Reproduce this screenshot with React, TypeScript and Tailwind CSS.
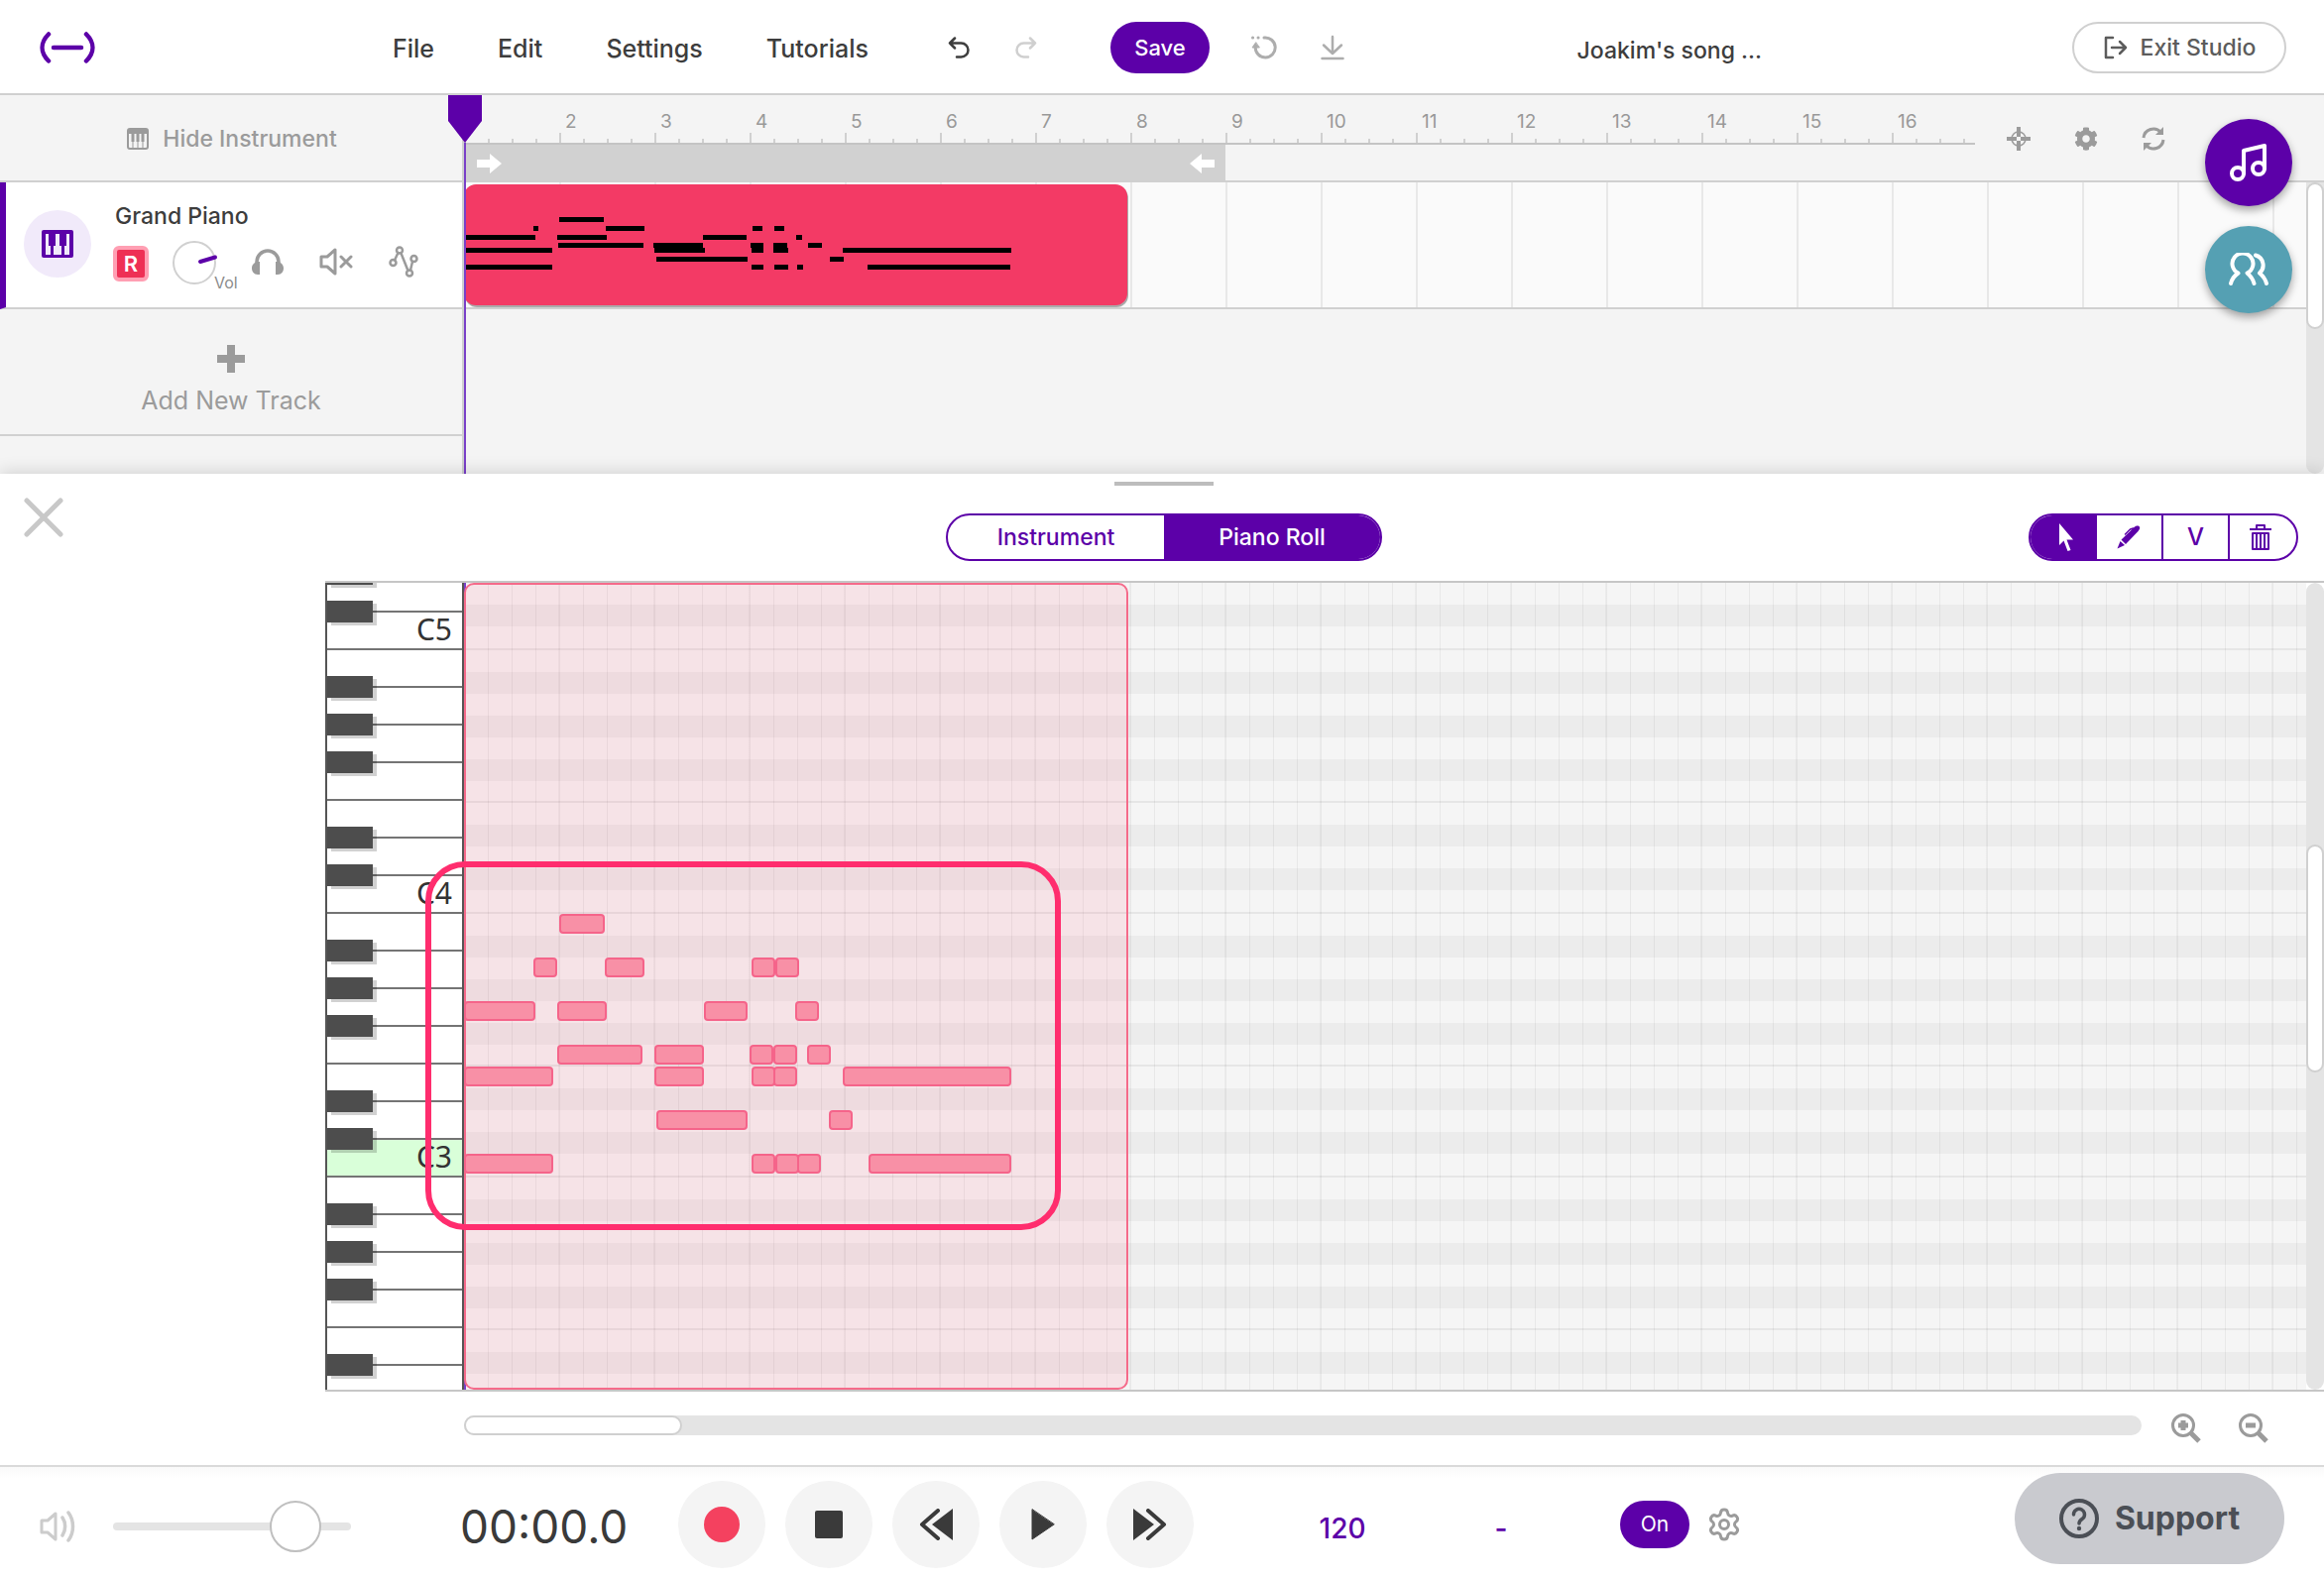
import type { ReactNode } from "react";
import { FaCog } from "react-icons/fa";
import { Settings } from "lucide-react";

type Note = [x: number, y: number, width: number];

const CLIP_NOTES: Note[] = [
  [96, 33, 45],
  [70, 42, 5], [143, 42, 39], [291, 42, 10], [313, 42, 10],
  [2, 51, 70], [94, 51, 50], [241, 51, 44], [335, 51, 6],
  [95, 59, 86], [191, 59, 50], [289, 59, 13], [312, 59, 14], [347, 59, 14],
  [2, 64, 87], [192, 64, 51], [290, 64, 12], [312, 64, 15], [382, 64, 170],
  [194, 73, 92], [369, 73, 14],
  [2, 81, 87], [290, 81, 12], [313, 81, 14], [336, 81, 6], [407, 81, 144],
];

const ROLL_NOTES: Note[] = [
  [96, 334, 46],
  [70, 378, 24], [142, 378, 40], [290, 378, 24], [314, 378, 24],
  [0, 422, 72], [94, 422, 50], [242, 422, 44], [334, 422, 24],
  [94, 466, 86], [192, 466, 50], [288, 466, 24], [312, 466, 24], [346, 466, 24],
  [0, 488, 90], [192, 488, 50], [290, 488, 24], [312, 488, 24], [382, 488, 170],
  [194, 532, 92], [368, 532, 24],
  [0, 576, 90], [290, 576, 24], [314, 576, 24], [336, 576, 24], [408, 576, 144],
];

const SEMITONES = ["B", "A#", "A", "G#", "G", "F#", "F", "E", "D#", "D", "C#", "C"];
const GRID_ROWS = ["D", "C#", "C", ...SEMITONES, ...SEMITONES, ...SEMITONES];

const WHITE = ["B", "A", "G", "F", "E", "D", "C"];
const KEYS = [
  "C5",
  ...WHITE.map((k) => k + "4"),
  ...WHITE.map((k) => k + "3"),
  "B2", "A2", "G2", "F2", "E2", "D2",
];

function Icon({ w, h, label, children, className = "" }: { w: number; h: number; label?: string; children: ReactNode; className?: string }) {
  return (
    <svg
      width={w}
      height={h}
      viewBox={`0 0 ${w} ${h}`}
      fill="none"
      stroke="currentColor"
      strokeLinecap="round"
      strokeLinejoin="round"
      aria-hidden={label ? undefined : true}
      aria-label={label}
      className={`shrink-0 ${className}`}
    >
      {children}
    </svg>
  );
}

function Header() {
  return (
    <header className="flex h-24 shrink-0 items-center border-b-2 border-[#d0d0d0] bg-white pt-[2px] pr-[38px] pl-10 font-medium text-[#3d3d3d]">
      <a href="#home" aria-label="Soundtrap home" className="w-[356px] text-[#5c00a8]">
        <Icon w={56} h={32}>
          <path d="M9 2.5C.5 11 .5 21 9 29.500" strokeWidth="4.500" />
          <path d="M47 2.500c8.500 8.500 8.500 18.500 0 27" strokeWidth="4.500" />
          <path d="M14 16H42" strokeWidth="4.500" />
        </Icon>
      </a>
      <nav className="flex gap-16 pt-1 text-[25px]">
        <button>File</button>
        <button>Edit</button>
        <button>Settings</button>
        <button>Tutorials</button>
      </nav>
      <div className="ml-20 flex items-center gap-[46px]">
        <button aria-label="Undo">
          <Icon w={22} h={22}>
            <path d="M7 1.500 2 6.500l5 5M2 6.500h11.500a7 7 0 0 1 0 14H9" strokeWidth="2.500" />
          </Icon>
        </button>
        <button aria-label="Redo" className="text-[#cfcfcf]">
          <Icon w={22} h={22}>
            <path d="M15 1.500l5 5-5 5M20 6.500H8.500a7 7 0 0 0 0 14H13" strokeWidth="2.500" />
          </Icon>
        </button>
      </div>
      <button className="ml-[74px] flex h-[52px] w-[100px] items-center justify-center rounded-full bg-[#5c00a8] text-[22px] text-white">Save</button>
      <div className="ml-[42px] flex items-center gap-[44px] text-[#adadad]">
        <button aria-label="Restore version">
          <Icon w={26} h={24}>
            <path d="M1.500 2h.1M7 2h.1" strokeWidth="3" />
            <path d="M13 2a10 10 0 1 1-8.800 9.500" strokeWidth="3" />
            <path d="M4.500 7 1 12h7Z" fill="currentColor" strokeWidth="1" />
          </Icon>
        </button>
        <button aria-label="Download">
          <Icon w={24} h={26}>
            <path d="M12 2v16M3 10.500l9 8.500 9-8.500M1.500 24h21" strokeWidth="2.500" />
          </Icon>
        </button>
      </div>
      <h1 className="ml-auto pt-[6px] text-[23px] font-medium">Joakim's song ...</h1>
      <a href="#exit" className="ml-[313px] flex h-[52px] w-[216px] shrink-0 items-center justify-center gap-3 rounded-full border-2 border-[#d0d0d0] text-[23px] text-[#5c5c5c]">
        <Icon w={26} h={24}>
          <path d="M10 2H3v20h7M9 12h14M17 6l6 6-6 6" strokeWidth="2.500" />
        </Icon>
        <span className="whitespace-nowrap">Exit Studio</span>
      </a>
    </header>
  );
}

function Ruler() {
  return (
    <div className="flex h-[88px] border-b-2 border-[#d0d0d0]">
      <div className="flex flex-1 flex-col overflow-hidden">
        <div className="flex h-[50px] border-b-2 border-[#c4c4c4]">
          {Array.from({ length: 16 }, (_, i) => (
            <div key={i} className="flex w-24 shrink-0 flex-col justify-end">
              <span className="pl-[6px] text-[19px] leading-[22px] text-[#999]">{i === 0 ? "" : i + 1}</span>
              <div className="flex items-end">
                <i className="h-[10px] w-6 border-l-2 border-[#d0d0d0]" />
                <i className="h-1 w-6 border-l-2 border-[#d0d0d0]" />
                <i className="h-1 w-6 border-l-2 border-[#d0d0d0]" />
                <i className="h-1 w-6 border-l-2 border-[#d0d0d0]" />
              </div>
            </div>
          ))}
        </div>
        <div className="flex h-9 w-[768px] items-center justify-between bg-[#d1d1d1] pt-[2px] pr-[11px] pl-[13px] text-white">
          <Icon w={26} h={20}>
            <path d="M0 6h13V0l12 10-12 10v-6H0Z" fill="currentColor" stroke="none" />
          </Icon>
          <Icon w={26} h={20}>
            <path d="M26 6H13V0L1 10l12 10v-6h13Z" fill="currentColor" stroke="none" />
          </Icon>
        </div>
      </div>
      <div className="flex w-[352px] shrink-0 items-center gap-[44px] pt-[2px] pl-8 text-[#9b9b9b]">
        <button aria-label="Center on playhead">
          <Icon w={24} h={24}>
            <circle cx="12" cy="12" r="7" strokeWidth="1.500" />
            <path d="M12 0v10M12 14v10M0 12h10M14 12h10" strokeWidth="4" strokeLinecap="butt" />
          </Icon>
        </button>
        <button aria-label="Timeline settings">
          <FaCog size={24} />
        </button>
        <button aria-label="Toggle loop">
          <Icon w={24} h={24}>
            <path d="M2 11A10 10 0 0 1 19.500 5.500M22 13A10 10 0 0 1 4.500 18.500" strokeWidth="3" strokeLinecap="butt" />
            <path d="M22 0v8h-8ZM2 24v-8h8Z" fill="currentColor" stroke="none" />
          </Icon>
        </button>
      </div>
    </div>
  );
}

function PianoIcon() {
  return (
    <Icon w={32} h={28} label="Piano">
      <rect width="32" height="28" rx="2" fill="currentColor" stroke="none" />
      <path d="M4 4h3v12h2v9H4ZM14 4h4v12h2v9h-8v-9h2ZM25 4h3v21h-5v-9h2Z" fill="#f1eafa" stroke="none" />
    </Icon>
  );
}

function TrackHeader() {
  return (
    <div className="flex h-[128px] items-start border-b-2 border-l-[6px] border-b-[#d0d0d0] border-l-[#5c00a8] bg-white pl-[18px]">
      <div className="mt-7 flex size-[68px] items-center justify-center rounded-full bg-[#f1eafa] text-[#5c00a8]">
        <PianoIcon />
      </div>
      <div className="ml-[22px] flex flex-col pt-5">
        <span className="pl-[2px] text-[23px] leading-7 font-medium text-[#3d3d3d]">Grand Piano</span>
        <div className="flex h-16 items-center text-[#9b9b9b]">
          <button aria-label="Arm recording" className="mt-1 flex size-9 items-center justify-center rounded-md border-4 border-[#ff9fb3] bg-[#ee3055] text-[22px] font-semibold text-white">R</button>
          <div className="relative mt-[2px] ml-6 size-11">
            <Icon w={46} h={44}>
              <circle cx="22" cy="22" r="21" stroke="#d0d0d0" strokeWidth="2" />
              <path d="M28 21 43 16.500" stroke="#5c00a8" strokeWidth="4" />
            </Icon>
            <span className="absolute top-8 left-[42px] text-base leading-5 text-[#8c8c8c]">Vol</span>
          </div>
          <button aria-label="Solo" className="ml-9">
            <Icon w={32} h={28}>
              <path d="M5 18v-4a11 11 0 0 1 22 0v4" strokeWidth="3.500" />
              <path d="M8 14v13H6c-4 0-6-3-6-6.500S3 14 6 14ZM24 14v13h2c4 0 6-3 6-6.500S29 14 26 14Z" fill="currentColor" stroke="none" />
            </Icon>
          </button>
          <button aria-label="Mute" className="ml-9">
            <Icon w={34} h={28}>
              <path d="M2 9h6l8-7v24l-8-7H2Z" strokeWidth="3" />
              <path d="M22 9l10 10M32 9 22 19" strokeWidth="3" />
            </Icon>
          </button>
          <button aria-label="Automation" className="ml-9">
            <Icon w={30} h={32}>
              <path d="M6 14.500 9.500 7M12.500 7.500 19.500 25M22 24.500 24 16" strokeWidth="2.500" />
              <circle cx="4.500" cy="17" r="3" strokeWidth="2.500" />
              <circle cx="11" cy="4.500" r="3" strokeWidth="2.500" />
              <circle cx="21" cy="27.500" r="3" strokeWidth="2.500" />
              <circle cx="25.500" cy="13" r="3" strokeWidth="2.500" />
            </Icon>
          </button>
        </div>
      </div>
    </div>
  );
}

function Arrangement() {
  return (
    <section className="relative flex h-[382px] shrink-0 bg-[#f4f4f4]">
      <div className="w-[468px] shrink-0 border-r-2 border-[#d0d0d0]">
        <button className="flex h-[88px] w-full items-center justify-center gap-[14px] border-b-2 border-[#d0d0d0] pt-[2px] pl-[2px] text-[23px] font-medium text-[#9b9b9b]">
          <Icon w={22} h={22}>
            <rect x="1" y="1" width="20" height="20" rx="2" strokeWidth="2" />
            <path d="M1 1h20v5H1ZM4.500 5h3v9h-3ZM9.500 5h3v9h-3ZM14.500 5h3v9h-3Z" fill="currentColor" stroke="none" />
            <path d="M6 14v7M11 14v7M16 14v7" strokeWidth="1" />
          </Icon>
          Hide Instrument
        </button>
        <TrackHeader />
        <button className="flex h-[128px] w-full flex-col items-center justify-center gap-[10px] border-b-2 border-[#d0d0d0] pt-5 text-[25px] leading-9 text-[#9b9b9b]">
          <Icon w={28} h={28}>
            <path d="M14 0v28M0 14h28" strokeWidth="8" strokeLinecap="butt" />
          </Icon>
          Add New Track
        </button>
      </div>
      <div className="flex min-w-0 flex-1 flex-col">
        <Ruler />
        <div className="flex min-h-0 flex-1">
          <div className="min-w-0 flex-1">
            <div className="relative h-[128px] border-b-2 border-[#d0d0d0] bg-[#fafafa] bg-[repeating-linear-gradient(to_right,#e8e8e8_0_2px,transparent_2px_96px)]">
              <div className="absolute top-[2px] left-0 h-[122px] w-[669px] rounded-xl bg-[#f33a65] shadow-[1px_2px_0_#aaa]">
                {CLIP_NOTES.map(([x, y, w], i) => (
                  <i key={i} className="absolute h-[5px] bg-black" style={{ left: x, top: y, width: w }} />
                ))}
              </div>
            </div>
          </div>
          <div className="w-[18px] rounded-b-full bg-[#e4e4e4]">
            <div className="h-[148px] rounded-full border-2 border-[#d0d0d0] bg-white" />
          </div>
        </div>
      </div>
      <div className="absolute top-0 left-[452px] flex h-full w-[34px] flex-col items-center">
        <Icon w={34} h={48}>
          <path d="M0 0h34v26L17 48 0 26Z" fill="#5c00a8" stroke="none" />
        </Icon>
        <i className="w-[2px] flex-1 bg-[#7a40c8]" />
      </div>
      <div className="absolute top-6 right-8 flex flex-col gap-5 text-white">
        <button aria-label="Loops" className="flex size-[88px] items-center justify-center rounded-full bg-[#5c00a8] shadow-[0_4px_8px_rgba(0,0,0,0.35)]">
          <Icon w={38} h={38}>
            <circle cx="8" cy="30" r="6" strokeWidth="4" />
            <circle cx="29" cy="25" r="6" strokeWidth="4" />
            <path d="M14 30V7l21-5v23" strokeWidth="4" />
          </Icon>
        </button>
        <button aria-label="Collaborate" className="flex size-[88px] items-center justify-center rounded-full bg-[#55a0b3] shadow-[0_4px_8px_rgba(0,0,0,0.35)]">
          <Icon w={40} h={34}>
            <path d="M2 31c1-4 3-7.500 7.500-10.500a10.500 10.500 0 1 1 9 0C22 23.500 24.500 27 25.500 31" strokeWidth="4" />
            <path d="M27 2.500a10.500 10.500 0 0 1 4 18c3.500 3 6 6.500 7 10.500" strokeWidth="4" />
          </Icon>
        </button>
      </div>
    </section>
  );
}

function Toolbar() {
  return (
    <div className="grid h-[108px] grid-cols-3 items-start">
      <button aria-label="Close panel" className="mt-6 ml-6 justify-self-start text-[#c8c8c8]">
        <Icon w={40} h={40}>
          <path d="M3 3l34 34M37 3 3 37" strokeWidth="5" />
        </Icon>
      </button>
      <div className="flex flex-col items-center pt-2 pl-1">
        <i className="h-1 w-[100px] bg-[#bdbdbd]" />
        <div role="tablist" className="mt-7 grid h-12 w-[440px] grid-cols-2 overflow-hidden rounded-full border-2 border-[#5c00a8] text-[23px] font-medium">
          <button role="tab" aria-selected="false" className="text-[#5c00a8]">Instrument</button>
          <button role="tab" aria-selected="true" className="bg-[#5c00a8] text-white">Piano Roll</button>
        </div>
      </div>
      <div className="mt-10 mr-[26px] grid h-12 w-[272px] grid-cols-4 justify-self-end divide-x-2 divide-[#5c00a8] overflow-hidden rounded-full border-2 border-[#5c00a8] text-[#5c00a8] *:flex *:items-center *:justify-center">
        <button aria-label="Select" className="bg-[#5c00a8] pl-2 text-white">
          <Icon w={16} h={28}>
            <path d="M1 0v22l4.500-4.500L9.500 28l3-1-4-10.500H15Z" fill="currentColor" stroke="none" />
          </Icon>
        </button>
        <button aria-label="Draw">
          <Icon w={24} h={24}>
            <path d="M17 2.500c2-2 4-2.500 5.500-1.500s.5 3-1 5L9 19l-4.500-4.500Z" fill="currentColor" stroke="none" />
            <path d="M3.500 16 8 20 .5 23.500Z" fill="currentColor" stroke="none" />
            <path d="M8.500 9 13.500 4l3-1" strokeWidth="1.500" />
          </Icon>
        </button>
        <button aria-label="Velocity" className="text-2xl font-medium">V</button>
        <button aria-label="Delete" className="pr-1">
          <Icon w={22} h={26}>
            <path d="M0 5h22M7 5V1h8v4" strokeWidth="2" strokeLinecap="butt" />
            <path d="M3 9h16v16H3ZM7 9v16M11 9v16M15 9v16" strokeWidth="2" />
          </Icon>
        </button>
      </div>
    </div>
  );
}

function Keyboard() {
  return (
    <div className="relative flex w-[140px] shrink-0 flex-col overflow-hidden border-x-2 border-[#555] bg-white font-['Noto_Sans',sans-serif] text-3xl leading-[34px] text-[#333]">
      <div className="relative h-[30px] shrink-0 border-b-2 border-[#747474]">
        <i className="absolute -top-5 left-0 h-[22px] w-[46px] bg-[#4d4d4d] shadow-[4px_3px_0_#d0d0d0]" />
      </div>
      {KEYS.map((key) => (
        <div key={key} className={`relative h-[38px] shrink-0 border-b-2 border-[#747474] pr-[10px] text-right ${key === "C3" ? "bg-[#d9ffd9]" : ""}`}>
          {"CDFGA".includes(key[0]) && <i className="absolute -top-3 left-0 h-[22px] w-[46px] bg-[#4d4d4d] shadow-[4px_3px_0_rgba(0,0,0,0.18)]" />}
          {key[0] === "C" && key}
        </div>
      ))}
    </div>
  );
}

function NoteGrid() {
  return (
    <div className="relative min-w-0 flex-1 overflow-hidden bg-[#f5f5f5]">
      <div className="flex flex-col">
        {GRID_ROWS.map((row, i) => (
          <div
            key={i}
            className={`shrink-0 ${row === "C" ? "h-6 border-b-2 border-[#e6e6e6]" : row === "F" ? "h-[22px] border-b-2 border-[#e6e6e6]" : row.includes("#") ? "h-[22px] bg-[#ececec]" : "h-[22px]"}`}
          />
        ))}
      </div>
      <div className="absolute inset-0 bg-[repeating-linear-gradient(to_right,rgba(0,0,0,0.055)_0_1px,transparent_1px_24px),repeating-linear-gradient(to_right,transparent_0_95px,rgba(0,0,0,0.04)_95px_96px)]" />
      <i className="absolute inset-y-0 left-0 w-[2px] bg-[#7a40c8]" />
      <div className="absolute inset-y-0 left-0 w-[670px] rounded-[10px] border-2 border-[#f56a8a] bg-[rgba(255,65,105,0.1)]" />
      {ROLL_NOTES.map(([x, y, w], i) => (
        <i key={i} className="absolute h-5 rounded-[4px] border-2 border-[#f5648a] bg-[#f890a6]" style={{ left: x, top: y, width: w }} />
      ))}
    </div>
  );
}

function PianoRoll() {
  return (
    <section className="relative shrink-0 bg-white shadow-[0_-2px_16px_rgba(0,0,0,0.14)]">
      <Toolbar />
      <div className="relative ml-[328px] flex h-[818px] border-y-2 border-[#c6c6c6]">
        <Keyboard />
        <NoteGrid />
        <div className="flex w-[18px] flex-col rounded-full bg-[#e4e4e4] pt-[264px]">
          <div className="h-[230px] rounded-full border-2 border-[#d0d0d0] bg-white" />
        </div>
        <div className="pointer-events-none absolute top-[281px] left-[101px] h-[372px] w-[641px] rounded-[40px] border-[6px] border-[#ff2d6e]" />
      </div>
      <div className="flex h-[74px] items-center pr-14 pb-[6px] pl-[468px] text-[#9b9b9b]">
        <div className="h-5 flex-1 rounded-full bg-[#e4e4e4]">
          <div className="h-full w-[220px] rounded-full border-2 border-[#d0d0d0] bg-white" />
        </div>
        <button aria-label="Zoom in" className="mt-[6px] ml-[30px]">
          <Icon w={30} h={30}>
            <circle cx="12" cy="12" r="10.500" strokeWidth="3" />
            <path d="M12 7v10M7 12h10" strokeWidth="5" strokeLinecap="butt" />
            <path d="M20 20l8 8" strokeWidth="5" strokeLinecap="butt" />
          </Icon>
        </button>
        <button aria-label="Zoom out" className="mt-[6px] ml-[38px]">
          <Icon w={30} h={30}>
            <circle cx="12" cy="12" r="10.500" strokeWidth="3" />
            <path d="M7 12h10" strokeWidth="5" strokeLinecap="butt" />
            <path d="M20 20l8 8" strokeWidth="5" strokeLinecap="butt" />
          </Icon>
        </button>
      </div>
    </section>
  );
}

function Transport({ label, children }: { label: string; children: ReactNode }) {
  return (
    <button aria-label={label} className="flex size-[88px] items-center justify-center rounded-full bg-[#f4f4f4] text-[#3a3a3a]">
      {children}
    </button>
  );
}

function Player() {
  return (
    <footer className="relative flex min-h-[114px] flex-1 items-center border-t-2 border-[#dadada] bg-white bg-linear-to-b from-[#f9f9f9] to-white to-[10%] pt-1 pl-10">
      <Icon w={36} h={32} label="Volume" className="mt-1 text-[#cccccc]">
        <path d="M2 10h6l8-7v26l-8-7H2Z" strokeWidth="3" />
        <path d="M23 7c3.500 5 3.500 13 0 18M29 2c6 8 6 20 0 28" strokeWidth="3.500" />
      </Icon>
      <input
        type="range"
        aria-label="Master volume"
        defaultValue={84}
        className="mt-1 ml-[38px] h-2 w-[240px] appearance-none rounded-full bg-[#e4e4e4] [&::-webkit-slider-thumb]:size-[52px] [&::-webkit-slider-thumb]:appearance-none [&::-webkit-slider-thumb]:rounded-full [&::-webkit-slider-thumb]:border-2 [&::-webkit-slider-thumb]:border-[#bfbfbf] [&::-webkit-slider-thumb]:bg-white"
      />
      <time className="ml-[110px] w-[184px] pt-1 text-[46px] leading-[56px] text-[#3a3a3a]">00:00.0</time>
      <div className="ml-9 flex gap-5">
        <Transport label="Record">
          <i className="size-9 rounded-full bg-[#f4415f]" />
        </Transport>
        <Transport label="Stop">
          <i className="size-7 rounded-[2px] bg-[#3a3a3a]" />
        </Transport>
        <Transport label="Rewind">
          <Icon w={34} h={32}>
            <path d="M34 0v32L13 16Z" fill="currentColor" stroke="none" />
            <path d="M19 2 3 16l16 14" strokeWidth="4" />
          </Icon>
        </Transport>
        <Transport label="Play">
          <Icon w={24} h={32}>
            <path d="M1 1v30L23 16Z" fill="currentColor" strokeWidth="1" />
          </Icon>
        </Transport>
        <Transport label="Fast forward">
          <Icon w={34} h={32}>
            <path d="M0 0v32L21 16Z" fill="currentColor" stroke="none" />
            <path d="M15 2l16 14-16 14" strokeWidth="4" />
          </Icon>
        </Transport>
      </div>
      <button aria-label="Tempo 120" className="ml-[110px] w-[80px] pt-2 text-[28px] font-medium text-[#5c00a8]">120</button>
      <button aria-label="Key signature" className="ml-[80px] w-[80px] pt-2 text-[28px] font-medium text-[#5c00a8]">-</button>
      <button aria-label="Metronome on" className="ml-20 flex h-12 w-[70px] items-center justify-center rounded-full bg-[#5c00a8] text-[21px] text-white">On</button>
      <button aria-label="Metronome settings" className="ml-[17px] text-[#9b9b9b]">
        <Settings size={36} strokeWidth={2} />
      </button>
      <button className="absolute top-[6px] right-10 flex h-[92px] w-[272px] items-center justify-center gap-4 rounded-full bg-[#c9cacf] text-[32px] font-bold text-[#4b4f56]">
        <Icon w={40} h={40}>
          <circle cx="20" cy="20" r="18" strokeWidth="4" />
          <path d="M14.500 16a5.500 5.500 0 1 1 8.500 4.500c-2 1.400-3 2.300-3 4.500" strokeWidth="3.500" />
          <circle cx="20" cy="30" r="2.200" fill="currentColor" stroke="none" />
        </Icon>
        Support
      </button>
    </footer>
  );
}

export default function App() {
  return (
    <main className="flex min-h-screen flex-col overflow-hidden bg-white font-['Inter',sans-serif]">
      <Header />
      <Arrangement />
      <PianoRoll />
      <Player />
    </main>
  );
}
